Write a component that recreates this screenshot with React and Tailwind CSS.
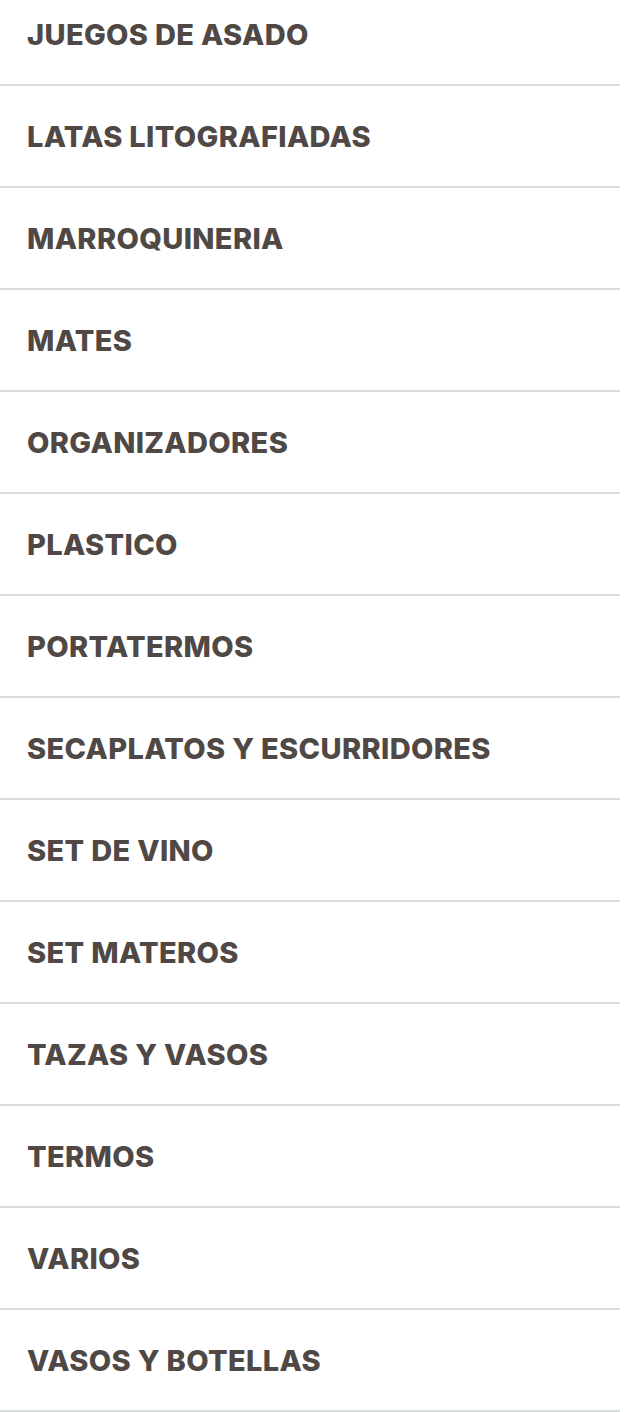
const categorias = [
  "JUEGOS DE ASADO",
  "LATAS LITOGRAFIADAS",
  "MARROQUINERIA",
  "MATES",
  "ORGANIZADORES",
  "PLASTICO",
  "PORTATERMOS",
  "SECAPLATOS Y ESCURRIDORES",
  "SET DE VINO",
  "SET MATEROS",
  "TAZAS Y VASOS",
  "TERMOS",
  "VARIOS",
  "VASOS Y BOTELLAS",
];

export default function App() {
  return (
    <div className="w-[628px] h-[1412px] overflow-hidden bg-white">
      <ul className="w-[620px] -mt-[16px]">
        {categorias.map((cat) => (
          <li
            key={cat}
            className="h-[102px] flex items-center pl-[27px] border-b-2 border-[#d5dedd]"
          >
            <a
              href="#"
              className="text-[29px] font-extrabold text-[#4f4845] leading-none tracking-[0.012em]"
              style={{ fontFamily: "Inter, 'Liberation Sans', sans-serif" }}
            >
              {cat}
            </a>
          </li>
        ))}
      </ul>
    </div>
  );
}
